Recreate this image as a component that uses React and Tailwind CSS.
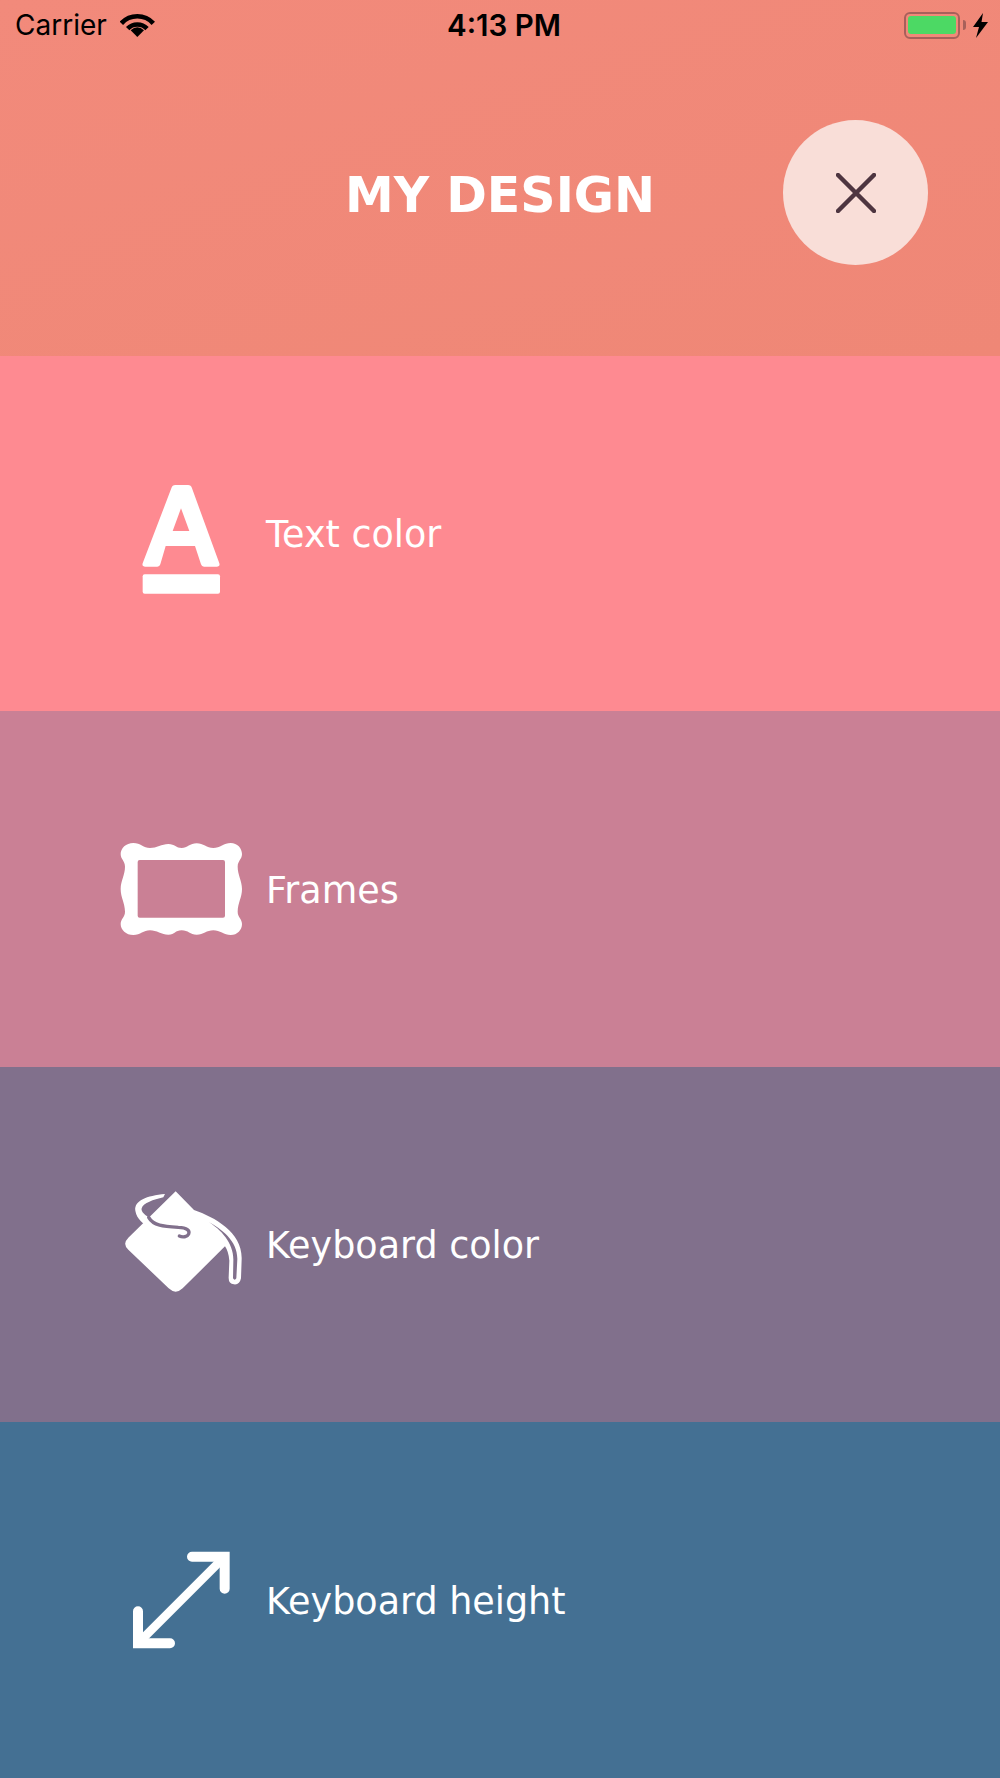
import React from 'react';

const DEJAVU = "font-['DejaVu_Sans',sans-serif]";

function TextColorIcon() {
    return (
        <svg className="w-[160px] h-[130px] shrink-0" viewBox="15 24 480 390" fill="#fff">
            <path
                fillRule="evenodd"
                d="M214 85 Q217 75 226 75 H264 Q273 75 276 85 L358 310 Q361 320 350 320 H312 Q305 320 303 313 L285 258 H197 L181 313 Q179 320 172 320 H136 Q125 320 128 310 Z M243 145 L218 213 H268 Z"
            />
            <rect x="128" y="343" width="232" height="58" rx="6" />
        </svg>
    );
}

function FramesIcon() {
    return (
        <svg className="w-[160px] h-[130px] shrink-0" viewBox="15 12 480 390" fill="#fff">
            <path
                fillRule="evenodd"
                d="M100 69 C122 69 130 84 150 84 S185 72 205 72 S228 84 245 84 S270 70 290 70 S320 84 340 84 S372 69 392 69 C412 69 426 85 426 102 C426 118 413 122 413 140 C413 165 426 182 426 207 C426 232 413 250 413 275 C413 292 426 296 426 312 C426 330 412 345 392 345 C372 345 360 331 340 331 S310 344 290 344 S265 331 245 331 S225 344 205 344 S170 331 150 331 S122 345 100 345 C78 345 62 330 62 312 C62 296 75 292 75 275 C75 250 62 232 62 207 C62 182 75 165 75 140 C75 122 62 118 62 102 C62 85 78 69 100 69 Z M119 120 H369 Q375 120 375 126 V287 Q375 293 369 293 H119 Q113 293 113 287 V126 Q113 120 119 120 Z"
            />
        </svg>
    );
}

function BucketIcon() {
    return (
        <svg className="w-[160px] h-[130px] shrink-0" viewBox="-15 13 480 390" fill="#fff">
            <path d="M197 47 L252 103 C315 125 397 170 395 250 L393 308 Q389 328 372 326 Q355 324 356 305 L358 255 Q356 228 345 212 L218 338 Q197 358 176 338 L55 222 Q36 205 55 186 Z" />
            <path fill="#81708c" d="M292 137 C335 160 382 195 382 250 L379 308 Q374 316 369 308 L370 255 C372 205 335 162 292 137 Z" />
            <path d="M165 55 C110 60 72 75 76 105 C80 130 100 145 120 155 L125 130 C105 120 92 108 95 98 C100 82 130 72 160 65 Z" />
            <path fill="none" stroke="#81708c" strokeWidth="10" strokeLinecap="round" d="M116 125 C130 150 160 152 205 155 C232 156 240 165 236 175 C232 184 218 186 208 181" />
        </svg>
    );
}

function HeightIcon() {
    return (
        <svg className="w-[160px] h-[130px] shrink-0" viewBox="-15 15 480 390" fill="none" stroke="#fff" strokeLinecap="round">
            <path strokeWidth="30" d="M246 80 H344 V176" />
            <path strokeWidth="30" d="M84 244 V340 H180" />
            <path strokeWidth="26" strokeLinecap="butt" d="M340 84 L88 336" />
        </svg>
    );
}

function WifiIcon() {
    return (
        <svg className="w-[35px] h-[24px] ml-[13px]" viewBox="362 37 103 72">
            <path fill="none" stroke="#000" strokeWidth="14" d="M365 68 A65 65 0 0 1 461 68" />
            <path fill="none" stroke="#000" strokeWidth="14" d="M384 84 A40 40 0 0 1 442 84" />
            <path fill="#000" d="M413 109 L393 89 Q413 70 433 89 Z" />
        </svg>
    );
}

function StatusBar() {
    return (
        <div className="h-[50px] grid grid-cols-[1fr_auto_1fr] items-center text-black font-['Inter',sans-serif]">
            <div className="flex items-center pl-[15px]">
                <span className="text-[28px] leading-none">Carrier</span>
                <WifiIcon />
            </div>
            <span className="text-[29.5px] leading-none font-semibold pl-[8px] pt-[2px]">4:13 PM</span>
            <div className="flex items-center justify-end pr-[12px]">
                <div className="w-[56px] h-[27px] rounded-[6px] border-2 border-[#a8605a] flex items-center justify-center">
                    <div className="w-[48px] h-[18px] rounded-[3px] bg-[#4cd964]"></div>
                </div>
                <div className="w-[3px] h-[10px] ml-[3px] rounded-r-[3px] bg-[#a8605a]"></div>
                <svg className="w-[15px] h-[25px] ml-[7px]" viewBox="0 0 15 25" fill="#000">
                    <path d="M10 0 L0 14 H6 L3 25 L15 9 H8.5 Z" />
                </svg>
            </div>
        </div>
    );
}

function MenuRow({ bg, icon, label }) {
    return (
        <div className={`flex-1 flex items-center pl-[105px] ${bg}`}>
            {icon}
            <span className={`text-white text-[36.5px] leading-none pt-[4px] ml-[1px] ${DEJAVU}`}>{label}</span>
        </div>
    );
}

export default function App() {
    return (
        <div className="w-[1000px] h-[1778px] flex flex-col overflow-hidden">
            <div className="flex-1 flex flex-col bg-gradient-to-br from-[#f28a7b] to-[#ef8776]">
                <StatusBar />
                <div className="h-[288px] grid grid-cols-[1fr_auto_1fr] items-center">
                    <div></div>
                    <h1 className={`text-white text-[49px] leading-none font-bold pt-[2px] ${DEJAVU}`}>MY DESIGN</h1>
                    <div className="flex justify-end pr-[72px]">
                        <button className="w-[145px] h-[145px] mb-[3px] rounded-full bg-[#f9ded8] flex items-center justify-center">
                            <svg className="w-[40px] h-[40px]" viewBox="0 0 40 40" fill="none" stroke="#4e3540" strokeWidth="4.5" strokeLinecap="round">
                                <path d="M2 2 L38 38 M38 2 L2 38" />
                            </svg>
                        </button>
                    </div>
                </div>
            </div>
            <MenuRow bg="bg-[#fe8a91]" icon={<TextColorIcon />} label="Text color" />
            <MenuRow bg="bg-[#ca8095]" icon={<FramesIcon />} label="Frames" />
            <MenuRow bg="bg-[#81708c]" icon={<BucketIcon />} label="Keyboard color" />
            <MenuRow bg="bg-[#447093]" icon={<HeightIcon />} label="Keyboard height" />
        </div>
    );
}
